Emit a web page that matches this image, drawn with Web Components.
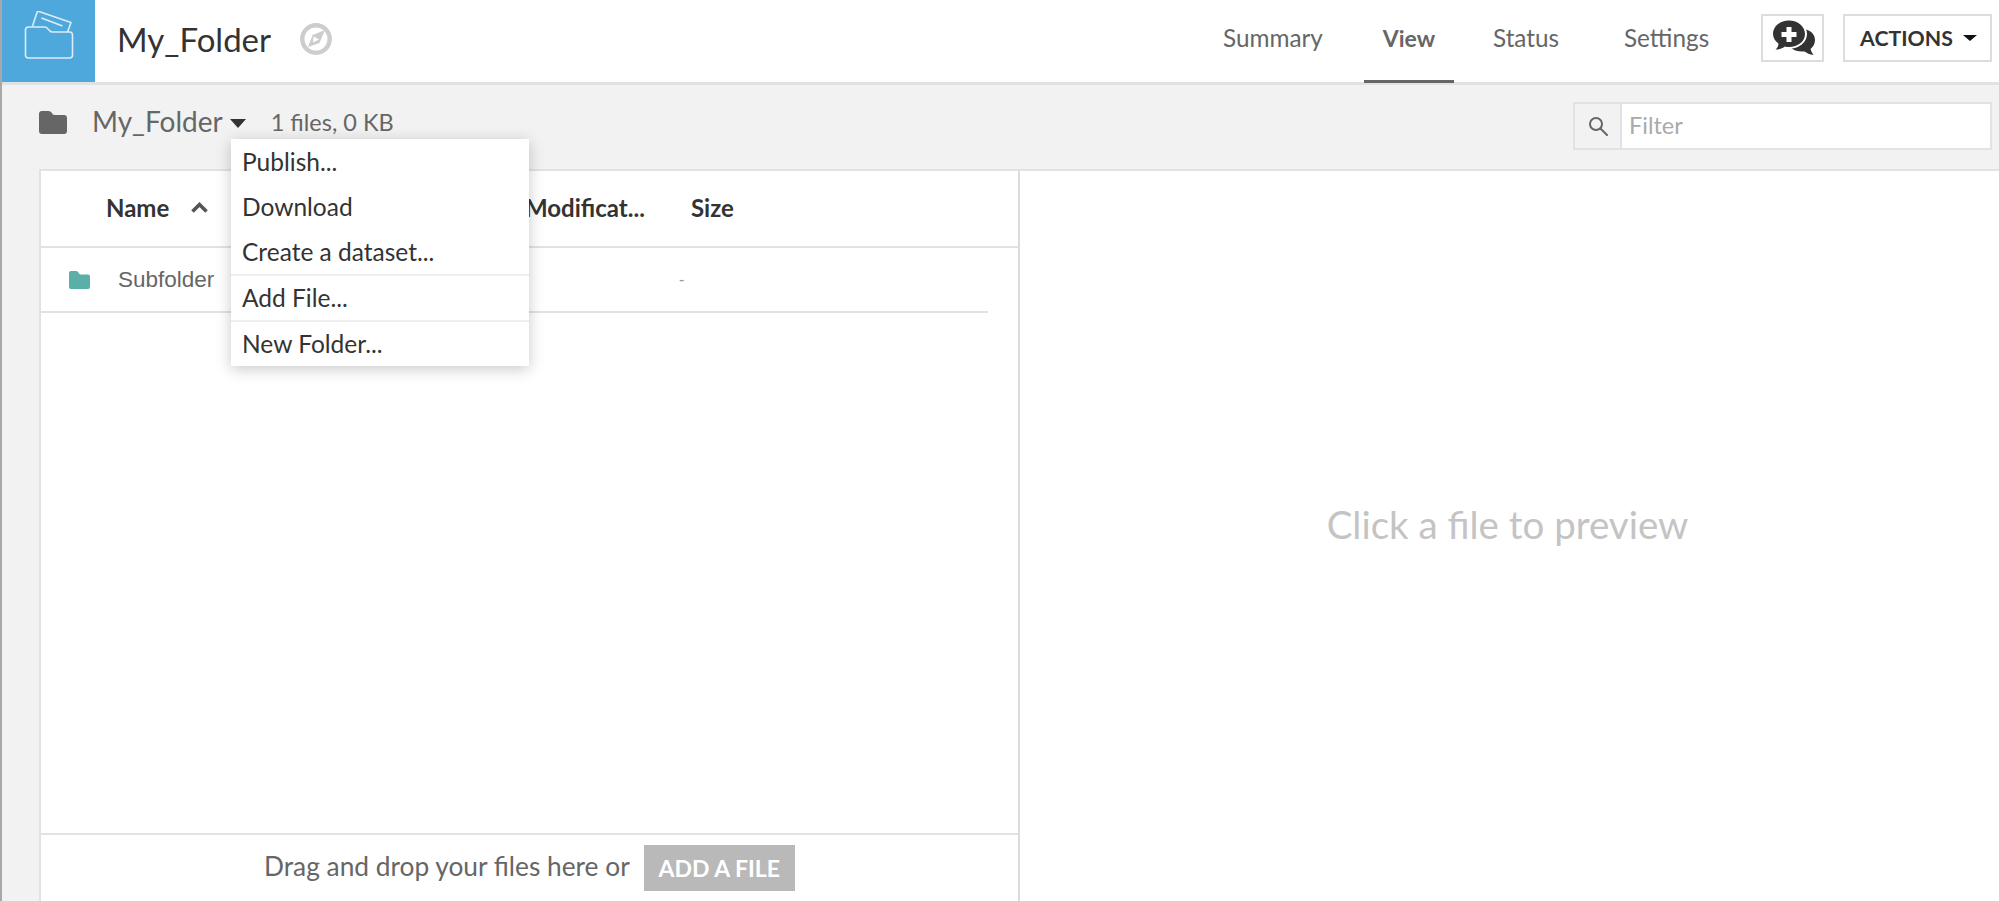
<!DOCTYPE html>
<html>
<head>
<meta charset="utf-8">
<title>My_Folder</title>
<style>
  html, body { margin: 0; height: 100%; overflow: hidden; }
  body { font-family: Lato, "Noto Sans", sans-serif; color: #333; background: #f2f2f2; }
</style>
</head>
<body>
<folder-app>
  <app-header slot="header"></app-header>
  <folder-toolbar slot="toolbar"></folder-toolbar>
  <file-list slot="list"></file-list>
  <file-preview slot="preview">Click a file to preview</file-preview>
</folder-app>

<script>
class FolderApp extends HTMLElement {
  constructor() {
    super();
    this.attachShadow({ mode: 'open' });
    this.shadowRoot.innerHTML = `
      <style>
        :host { display: flex; flex-direction: column; height: 100vh; border-left: 2px solid #a8a8a8; box-sizing: border-box; position: relative; }
        .panels { flex: 1; min-height: 0; display: flex; margin-left: 37px; background: #fff; border-top: 2px solid #e2e2e2; border-left: 2px solid #e2e2e2; }
      </style>
      <slot name="header"></slot>
      <slot name="toolbar"></slot>
      <div class="panels">
        <slot name="list"></slot>
        <slot name="preview"></slot>
      </div>
    `;
  }
}

class AppHeader extends HTMLElement {
  constructor() {
    super();
    this.attachShadow({ mode: 'open' });
    this.shadowRoot.innerHTML = `
      <style>
        :host { display: flex; align-items: stretch; height: 82px; background: #fff; border-bottom: 3px solid #e2e2e2; }
        .tile { width: 93px; background: #4fa8dc; display: flex; align-items: center; justify-content: center; }
        .title { margin-left: 22px; font-size: 33px; line-height: 78px; color: #333; }
        .compass { margin: 0 0 4px 29px; align-self: center; display: block; }
        nav { margin-left: auto; display: flex; height: 85px; margin-bottom: -3px; }
        nav a { box-sizing: border-box; height: 83px; line-height: 76px; font-size: 24.300px; color: #666; }
        nav a.active { font-weight: 700; border-bottom: 3px solid #666; font-size: 23px; text-align: center; }
        .btn { box-sizing: border-box; height: 48px; align-self: center; margin-bottom: 6px; border: 2px solid #ddd; background: #fff; display: flex; align-items: center; justify-content: center; }
        .comment { width: 63px; }
        .comment svg { margin-left: 3px; }
        .actions { width: 149px; margin: 0 7px 6px 19px; padding-left: 2px; font-size: 21.300px; font-weight: 700; color: #333; gap: 10px; }
        .actions i { width: 0; height: 0; border: 7px solid transparent; border-top: 6px solid #111; border-bottom: 0; }
      </style>
      <div class="tile">
        <svg width="60" height="60" viewBox="18.5 11 60 60" fill="none" stroke="#dcedf8" stroke-width="1.6" stroke-linejoin="round">
          <path d="M25 30q0-3 3-3H44q2 0 3 1.5l2 2q1 1.5 3 1.5H69q3 0 3 3V55q0 3-3 3H28q-3 0-3-3Z"/>
          <path d="M32 26L37 11L70.5 22.500L67 32"/>
          <path d="M41 18L62 26"/>
        </svg>
      </div>
      <div class="title">My_Folder</div>
      <svg class="compass" width="32" height="32" viewBox="0 0 32 32">
        <circle cx="16" cy="16" r="13.700" fill="none" stroke="#cdcdcd" stroke-width="4.400"/>
        <path d="M25 7L19.500 20L8 24L12.500 12Z" fill="#cdcdcd"/>
        <path d="M13.500 13.500L19 16.500L13 19.500Z" fill="#fff"/>
      </svg>
      <nav>
        <a style="width:141px">Summary</a>
        <a class="active" style="width:90px">View</a>
        <a style="width:170px;padding-left:39px">Status</a>
        <a style="width:137px">Settings</a>
      </nav>
      <div class="btn comment">
        <svg width="44" height="36" viewBox="0 0 44 36">
          <path d="M30 9C38 9 43 14 43 20C43 24 41 27 38.500 29C39 31 40 33 41.500 35C38 34.500 34.500 33 32.500 31.500C27 32 21 30.500 18 27Z" fill="#333"/>
          <ellipse cx="17" cy="14" rx="18" ry="15" fill="#fff"/>
          <path d="M17 0.500C26 0.500 33 6.500 33 14C33 21.500 26 27 17 27C15.500 27 14 27 13 26.500C10.500 28.500 7 29.500 3.500 29.500C5.500 28 6.500 25.500 6.500 23.500C3 21 1 17.500 1 14C1 6.500 8 0.500 17 0.500Z" fill="#333"/>
          <path d="M14.500 7h5v5h5v5h-5v5h-5v-5h-5v-5h5Z" fill="#fff"/>
        </svg>
      </div>
      <div class="btn actions">ACTIONS<i></i></div>
    `;
  }
}

class FolderToolbar extends HTMLElement {
  constructor() {
    super();
    this.attachShadow({ mode: 'open' });
    this.shadowRoot.innerHTML = `
      <style>
        :host { display: flex; align-items: center; height: 84px; background: #f2f2f2; position: relative; z-index: 2; }
        svg { display: block; }
        .crumb { display: flex; align-items: center; margin-bottom: 10px; }
        .folder { margin-left: 37px; }
        .name { margin-left: 25px; font-size: 28px; color: #666; margin-bottom: 2px; }
        .caret { width: 0; height: 0; margin: 2px 0 0 7px; border: 8.500px solid transparent; border-top: 9px solid #333; border-bottom: 0; }
        .count { margin-left: 25px; font-size: 23.500px; color: #666; }
        .filter { margin: 0 7px 2px auto; display: flex; box-sizing: border-box; width: 419px; height: 48px; border: 2px solid #e2e2e2; background: #fff; }
        .addon { width: 45px; background: #f2f2f2; border-right: 2px solid #e2e2e2; display: flex; align-items: center; justify-content: center; }
        .ph { margin-left: 7px; line-height: 42px; font-size: 23.500px; color: #aaa; }
      </style>
      <div class="crumb">
        <svg class="folder" width="28" height="23" viewBox="0 0 29 23" preserveAspectRatio="none">
          <path d="M0 3q0-3 3-3h7q2 0 3 1.500l1 1.500q.8 1 2.500 1H26q3 0 3 3v13q0 3-3 3H3q-3 0-3-3Z" fill="#666"/>
        </svg>
        <div class="name">My_Folder</div>
        <div class="caret"></div>
        <div class="count">1 files, 0 KB</div>
      </div>
      <action-menu></action-menu>
      <div class="filter">
        <div class="addon">
          <svg width="20" height="20" viewBox="0 0 20 20" fill="none" stroke="#666" stroke-width="2">
            <circle cx="8" cy="8" r="6"/><path d="M12.500 12.500L19 19" stroke-linecap="round"/>
          </svg>
        </div>
        <div class="ph">Filter</div>
      </div>
    `;
  }
}

class ActionMenu extends HTMLElement {
  constructor() {
    super();
    this.attachShadow({ mode: 'open' });
    this.shadowRoot.innerHTML = `
      <style>
        :host { position: absolute; left: 229px; top: 54px; width: 298px; display: block; background: #fff; box-shadow: 0 3px 14px rgba(0,0,0,.22); font-size: 24.500px; color: #333; z-index: 5; }
        div { height: 45px; line-height: 45px; padding-left: 11px; }
        div.s { height: 44px; line-height: 44px; }
        hr { margin: 0; border: 0; height: 2px; background: #eee; }
      </style>
      <div>Publish...</div>
      <div>Download</div>
      <div>Create a dataset...</div>
      <hr>
      <div class="s">Add File...</div>
      <hr>
      <div class="s">New Folder...</div>
    `;
  }
}

class FileList extends HTMLElement {
  constructor() {
    super();
    this.attachShadow({ mode: 'open' });
    this.shadowRoot.innerHTML = `
      <style>
        :host { box-sizing: border-box; width: 979px; display: flex; flex-direction: column; border-right: 2px solid #dcdcdc; background: #fff; }
        .head { box-sizing: border-box; display: grid; grid-template-columns: 484px 166px 1fr; align-items: center; height: 77px; padding-bottom: 2px; border-bottom: 2px solid #e2e2e2; font-size: 24px; font-weight: 700; color: #333; }
        .head .n { display: flex; align-items: center; padding-left: 65px; gap: 22px; }
        .row { display: grid; grid-template-columns: 27px 583px 1fr; align-items: center; height: 63px; margin-right: 30px; padding-left: 28px; border-bottom: 2px solid #e2e2e2; }
        .row span { font-family: "Liberation Sans", Arial, sans-serif; font-size: 22.500px; color: #666; padding-left: 22px; }
        .row .dash { font-size: 16px; color: #999; padding-left: 0; margin-left: 0; }
        .spacer { flex: 1; }
        .foot { height: 66px; border-top: 2px solid #e2e2e2; display: flex; align-items: center; padding-left: 223px; gap: 14px; font-size: 26.300px; color: #666; }
        .foot span { margin-bottom: 4px; }
        .add { width: 151px; height: 46px; line-height: 46px; background: #b9b9b9; color: #fff; font-weight: 700; font-size: 23px; text-align: center; }
        svg { display: block; }
      </style>
      <div class="head">
        <div class="n">Name
          <svg width="17" height="11" viewBox="0 0 17 11" fill="none" stroke="#555" stroke-width="3.600"><path d="M1.500 9.500L8.500 2.500L15.500 9.500"/></svg>
        </div>
        <div>Modificat...</div>
        <div>Size</div>
      </div>
      <div class="row">
        <svg width="21" height="18" viewBox="0 0 21 18"><path d="M0 2q0-2 2-2h5q1.500 0 2 1l1 1.500q.5 1 2 1h7q2 0 2 2V16q0 2-2 2H2q-2 0-2-2Z" fill="#5ab0a9"/></svg>
        <span>Subfolder</span>
        <span class="dash">-</span>
      </div>
      <div class="spacer"></div>
      <div class="foot"><span>Drag and drop your files here or</span><div class="add">ADD A FILE</div></div>
    `;
  }
}

class FilePreview extends HTMLElement {
  constructor() {
    super();
    this.attachShadow({ mode: 'open' });
    this.shadowRoot.innerHTML = `
      <style>
        :host { flex: 1; display: flex; align-items: center; justify-content: center; padding: 0 4px 24px 0; font-size: 38.500px; color: #c4c4c4; background: #fff; }
      </style>
      <slot></slot>
    `;
  }
}

customElements.define('folder-app', FolderApp);
customElements.define('app-header', AppHeader);
customElements.define('folder-toolbar', FolderToolbar);
customElements.define('action-menu', ActionMenu);
customElements.define('file-list', FileList);
customElements.define('file-preview', FilePreview);
</script>
</body>
</html>
